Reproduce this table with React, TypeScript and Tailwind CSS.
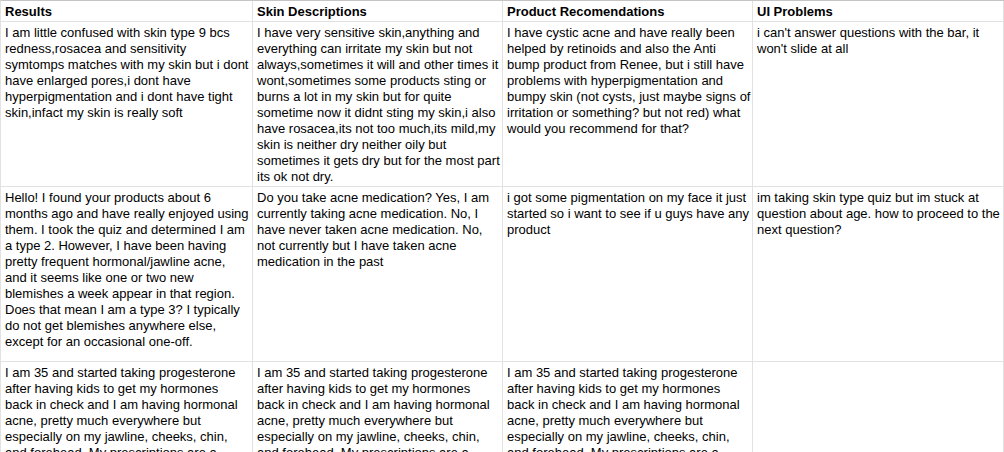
const headers = ["Results", "Skin Descriptions", "Product Recomendations", "UI Problems"];

// lines are kept exactly as the sheet wraps them
const progesterone = [
  "I am 35 and started taking progesterone",
  "after having kids to get my hormones",
  "back in check and I am having hormonal",
  "acne, pretty much everywhere but",
  "especially on my jawline, cheeks, chin,",
  "and forehead. My prescriptions are a",
  "combination of things that do not seem",
  "to help much at all.",
];

const rows: { height: string; cells: string[][] }[] = [
  {
    height: "h-[165px]",
    cells: [
      [
        "I am little confused with skin type 9 bcs",
        "redness,rosacea and sensitivity",
        "symtomps matches with my skin but i dont",
        "have enlarged pores,i dont have",
        "hyperpigmentation and i dont have tight",
        "skin,infact my skin is really soft",
      ],
      [
        "I have very sensitive skin,anything and",
        "everything can irritate my skin but not",
        "always,sometimes it will and other times it",
        "wont,sometimes some products sting or",
        "burns a lot in my skin but for quite",
        "sometime now it didnt sting my skin,i also",
        "have rosacea,its not too much,its mild,my",
        "skin is neither dry neither oily but",
        "sometimes it gets dry but for the most part",
        "its ok not dry.",
      ],
      [
        "I have cystic acne and have really been",
        "helped by retinoids and also the Anti",
        "bump product from Renee, but i still have",
        "problems with hyperpigmentation and",
        "bumpy skin (not cysts, just maybe signs of",
        "irritation or something? but not red) what",
        "would you recommend for that?",
      ],
      ["i can't answer questions with the bar, it", "won't slide at all"],
    ],
  },
  {
    height: "h-[175px]",
    cells: [
      [
        "Hello! I found your products about 6",
        "months ago and have really enjoyed using",
        "them. I took the quiz and determined I am",
        "a type 2. However, I have been having",
        "pretty frequent hormonal/jawline acne,",
        "and it seems like one or two new",
        "blemishes a week appear in that region.",
        "Does that mean I am a type 3? I typically",
        "do not get blemishes anywhere else,",
        "except for an occasional one-off.",
      ],
      [
        "Do you take acne medication? Yes, I am",
        "currently taking acne medication. No, I",
        "have never taken acne medication. No,",
        "not currently but I have taken acne",
        "medication in the past",
      ],
      [
        "i got some pigmentation on my face it just",
        "started so i want to see if u guys have any",
        "product",
      ],
      [
        "im taking skin type quiz but im stuck at",
        "question about age. how to proceed to the",
        "next question?",
      ],
    ],
  },
  {
    height: "h-[140px]",
    cells: [progesterone, progesterone, progesterone, []],
  },
];

const colWidths = ["w-[252px]", "w-[250px]", "w-[250px]", "flex-1"];

export default function App() {
  return (
    <div className="h-[452px] w-[1004px] overflow-hidden bg-white font-['Liberation_Sans',Arial,sans-serif] text-[13px] leading-4 text-black">
      <div className="border-l border-t border-[#c4c4c4] border-l-[#e2e2e2]">
        <div className="flex h-[21px]">
          {headers.map((h, i) => (
            <div
              key={h}
              className={`${colWidths[i]} shrink-0 border-b border-r border-[#e2e2e2] pl-1 pt-[3px] font-bold`}
            >
              {h}
            </div>
          ))}
        </div>
        {rows.map((row, r) => (
          <div key={r} className={`flex ${row.height}`}>
            {row.cells.map((lines, i) => (
              <div
                key={i}
                className={`${colWidths[i]} shrink-0 border-b border-r border-[#e2e2e2] pl-1 pt-[3px]`}
              >
                {lines.map((l, j) => (
                  <div key={j} className="whitespace-nowrap">
                    {l}
                  </div>
                ))}
              </div>
            ))}
          </div>
        ))}
      </div>
    </div>
  );
}
